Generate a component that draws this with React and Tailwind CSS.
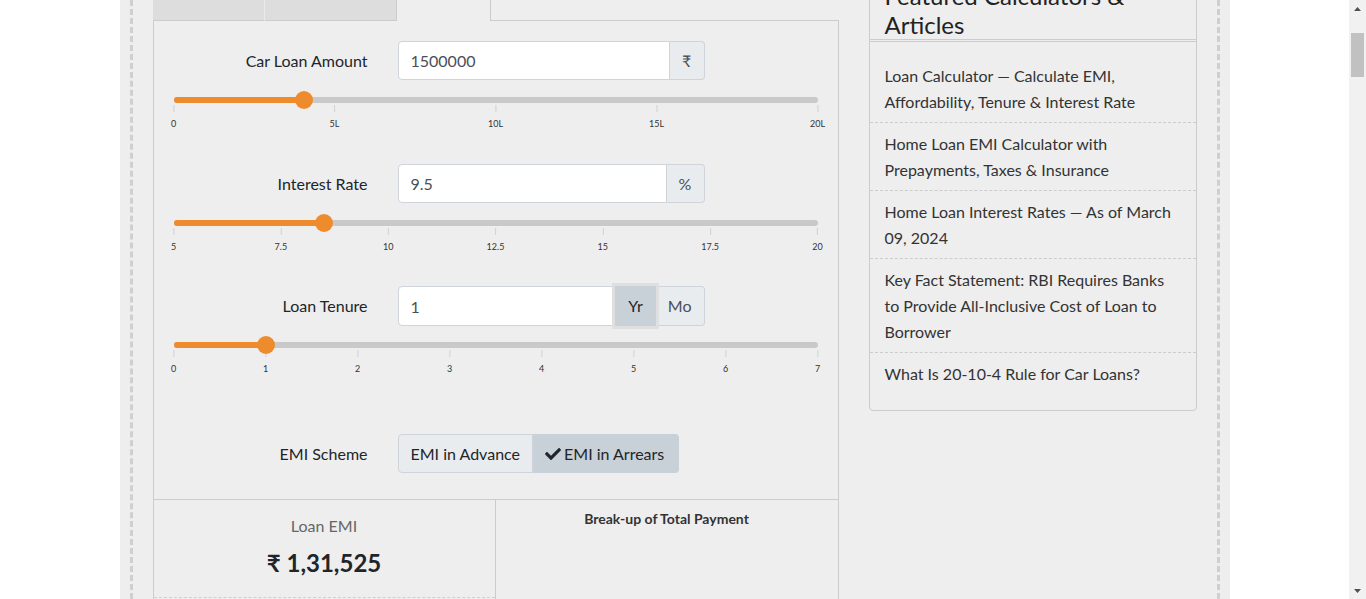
import { FaCheck } from 'react-icons/fa';

const sliders = [
  { label: 'Car Loan Amount', value: '1500000', pct: 20.2, ticks: ['0', '5L', '10L', '15L', '20L'] },
  { label: 'Interest Rate', value: '9.5', pct: 23.3, ticks: ['5', '7.5', '10', '12.5', '15', '17.5', '20'] },
  { label: 'Loan Tenure', value: '1', pct: 14.29, ticks: ['0', '1', '2', '3', '4', '5', '6', '7'] },
];

const articles = [
  'Loan Calculator — Calculate EMI, Affordability, Tenure & Interest Rate',
  'Home Loan EMI Calculator with Prepayments, Taxes & Insurance',
  'Home Loan Interest Rates — As of March 09, 2024',
  'Key Fact Statement: RBI Requires Banks to Provide All-Inclusive Cost of Loan to Borrower',
  'What Is 20-10-4 Rule for Car Loans?',
];

const Slider = ({ pct, ticks }) => (
  <div className="relative mx-[20px] h-[34px]">
    <div className="absolute inset-x-0 top-0 h-[6px] rounded-full bg-[#c9c9c9]" />
    <div className="absolute left-0 top-0 h-[6px] rounded-full bg-[#ee8c2d]" style={{ width: `${pct}%` }} />
    <div
      className="absolute top-[-6px] z-10 h-[18px] w-[18px] -translate-x-1/2 rounded-full bg-[#ee8c2d]"
      style={{ left: `${pct}%` }}
    />
    {ticks.map((t, i) => (
      <div
        key={t}
        className="absolute top-[8px] flex -translate-x-1/2 flex-col items-center"
        style={{ left: `${(i / (ticks.length - 1)) * 100}%` }}
      >
        <div className="h-[7px] w-px bg-[#ccd2d8]" />
        <span className="mt-[7px] text-[9px] leading-[10px] text-[#333]">{t}</span>
      </div>
    ))}
  </div>
);

const Label = ({ children }) => (
  <label className="w-[214px] text-right text-[16px] text-[#212529]">{children}</label>
);

const Addon = ({ children, className = '' }) => (
  <span
    className={`flex items-center justify-center border border-l-0 border-[#ced4da] bg-[#e9ecef] px-[12px] text-[16px] text-[#495057] ${className}`}
  >
    {children}
  </span>
);

const InputRow = ({ label, value, h, children }) => (
  <div className={`flex items-center ${h}`}>
    <Label>{label}</Label>
    <div className="ml-[30px] flex h-full w-[307px]">
      <input
        readOnly
        value={value}
        className="h-full min-w-0 flex-1 rounded-l-[4px] border border-[#ced4da] bg-white px-[12px] text-[16px] text-[#495057] outline-none"
      />
      {children}
    </div>
  </div>
);

const Scrollbar = () => (
  <div className="flex w-[17px] flex-col bg-[#f1f1f1]">
    <div className="flex h-[17px] items-center justify-center">
      <svg width="7" height="4" viewBox="0 0 7 4">
        <polygon points="3.5,0 7,4 0,4" fill="#505050" />
      </svg>
    </div>
    <div className="mx-[2px] mt-[16px] h-[44px] bg-[#c1c1c1]" />
    <div className="flex-1" />
    <div className="flex h-[17px] items-center justify-center">
      <svg width="7" height="4" viewBox="0 0 7 4">
        <polygon points="0,0 7,0 3.5,4" fill="#505050" />
      </svg>
    </div>
  </div>
);

const App = () => {
  return (
    <div className="flex h-[599px] overflow-hidden bg-white font-['Lato',sans-serif] text-[#212529]">
      <div className="flex-1 overflow-hidden">
        <div className="mx-auto h-full w-[1110px] bg-[#eee] px-[10px]">
          <div className="h-full overflow-hidden border-x-[3px] border-dashed border-[#cfcfcf]">
            <div className="-mt-[40px] flex items-start justify-between px-[20px]">
              {/* calculator */}
              <div className="w-[686px]">
                <div className="flex h-[61px]">
                  <div className="w-[111px] border-b border-[#ccc] bg-[#ddd]" />
                  <div className="w-[132px] border-b border-l border-[#ccc] border-l-[#eaeaea] bg-[#ddd]" />
                  <div className="w-[95px] border-x border-[#ccc]" />
                  <div className="flex-1 border-b border-[#ccc]" />
                </div>

                <div className="border-x border-[#ccc]">
                  <div className="pt-[20px]">
                    <InputRow label={sliders[0].label} value={sliders[0].value} h="h-[39px]">
                      <Addon className="w-[35px] rounded-r-[4px] px-0">₹</Addon>
                    </InputRow>
                    <div className="mt-[17px]">
                      <Slider pct={sliders[0].pct} ticks={sliders[0].ticks} />
                    </div>

                    <div className="mt-[33px]">
                      <InputRow label={sliders[1].label} value={sliders[1].value} h="h-[39px]">
                        <Addon className="w-[38px] rounded-r-[4px] px-0">%</Addon>
                      </InputRow>
                    </div>
                    <div className="mt-[17px]">
                      <Slider pct={sliders[1].pct} ticks={sliders[1].ticks} />
                    </div>

                    <div className="mt-[32px]">
                      <InputRow label={sliders[2].label} value={sliders[2].value} h="h-[40px]">
                        <span className="relative z-10 flex items-center border border-[#c8d0d8] bg-[#c8d0d8] px-[12px] text-[16px] text-[#212529] shadow-[0_0_0_3px_#dfdfdf]">
                          Yr
                        </span>
                        <Addon className="rounded-r-[4px] text-[#212529]">Mo</Addon>
                      </InputRow>
                    </div>
                    <div className="mt-[16px]">
                      <Slider pct={sliders[2].pct} ticks={sliders[2].ticks} />
                    </div>

                    <div className="mt-[58px] flex h-[39px] items-center">
                      <Label>EMI Scheme</Label>
                      <div className="ml-[30px] flex h-full text-[16px] text-[#212529]">
                        <span className="flex items-center rounded-l-[4px] border border-[#ced4da] bg-[#e9ecef] px-[12px]">
                          EMI in Advance
                        </span>
                        <span className="flex items-center gap-[3px] rounded-r-[4px] border border-l-0 border-[#c8d0d8] bg-[#c8d0d8] pl-[12px] pr-[14px]">
                          <FaCheck size={16} className="text-[#212529]" />
                          EMI in Arrears
                        </span>
                      </div>
                    </div>
                  </div>

                  <div className="mt-[26px] grid grid-cols-2 border-t border-[#ccc]">
                    <div className="border-r border-[#ccc]">
                      <div className="border-b border-dashed border-[#d0d0d0] pb-[18px] pt-[14px] text-center">
                        <div className="text-[16px] leading-[24px] text-[#666]">Loan EMI</div>
                        <div className="mt-[9px] text-[24px] font-bold leading-[32px] text-[#212529]">₹ 1,31,525</div>
                      </div>
                      <div className="h-[120px]" />
                    </div>
                    <div className="pt-[11px] text-center text-[14px] font-bold leading-[16px] text-[#333]">
                      Break-up of Total Payment
                    </div>
                  </div>
                </div>
              </div>

              {/* sidebar */}
              <div className="w-[328px] rounded-b-[4px] border border-[#ccc]">
                <h3 className="border-b border-[#ccc] px-[15px] pt-[20px] text-[24px] font-normal leading-[29px] text-[#222]">
                  Featured Calculators &amp; Articles
                </h3>
                <ul className="mt-px border-t border-[#ccc] pb-[16px] pt-[13px]">
                  {articles.map((a) => (
                    <li
                      key={a}
                      className="border-b border-dashed border-[#ccc] px-[15px] pb-[7px] pt-[8px] text-[16px] leading-[26px] text-[#333] last:border-b-0"
                    >
                      {a}
                    </li>
                  ))}
                </ul>
              </div>
            </div>
          </div>
        </div>
      </div>
      <Scrollbar />
    </div>
  );
};

export default App;
